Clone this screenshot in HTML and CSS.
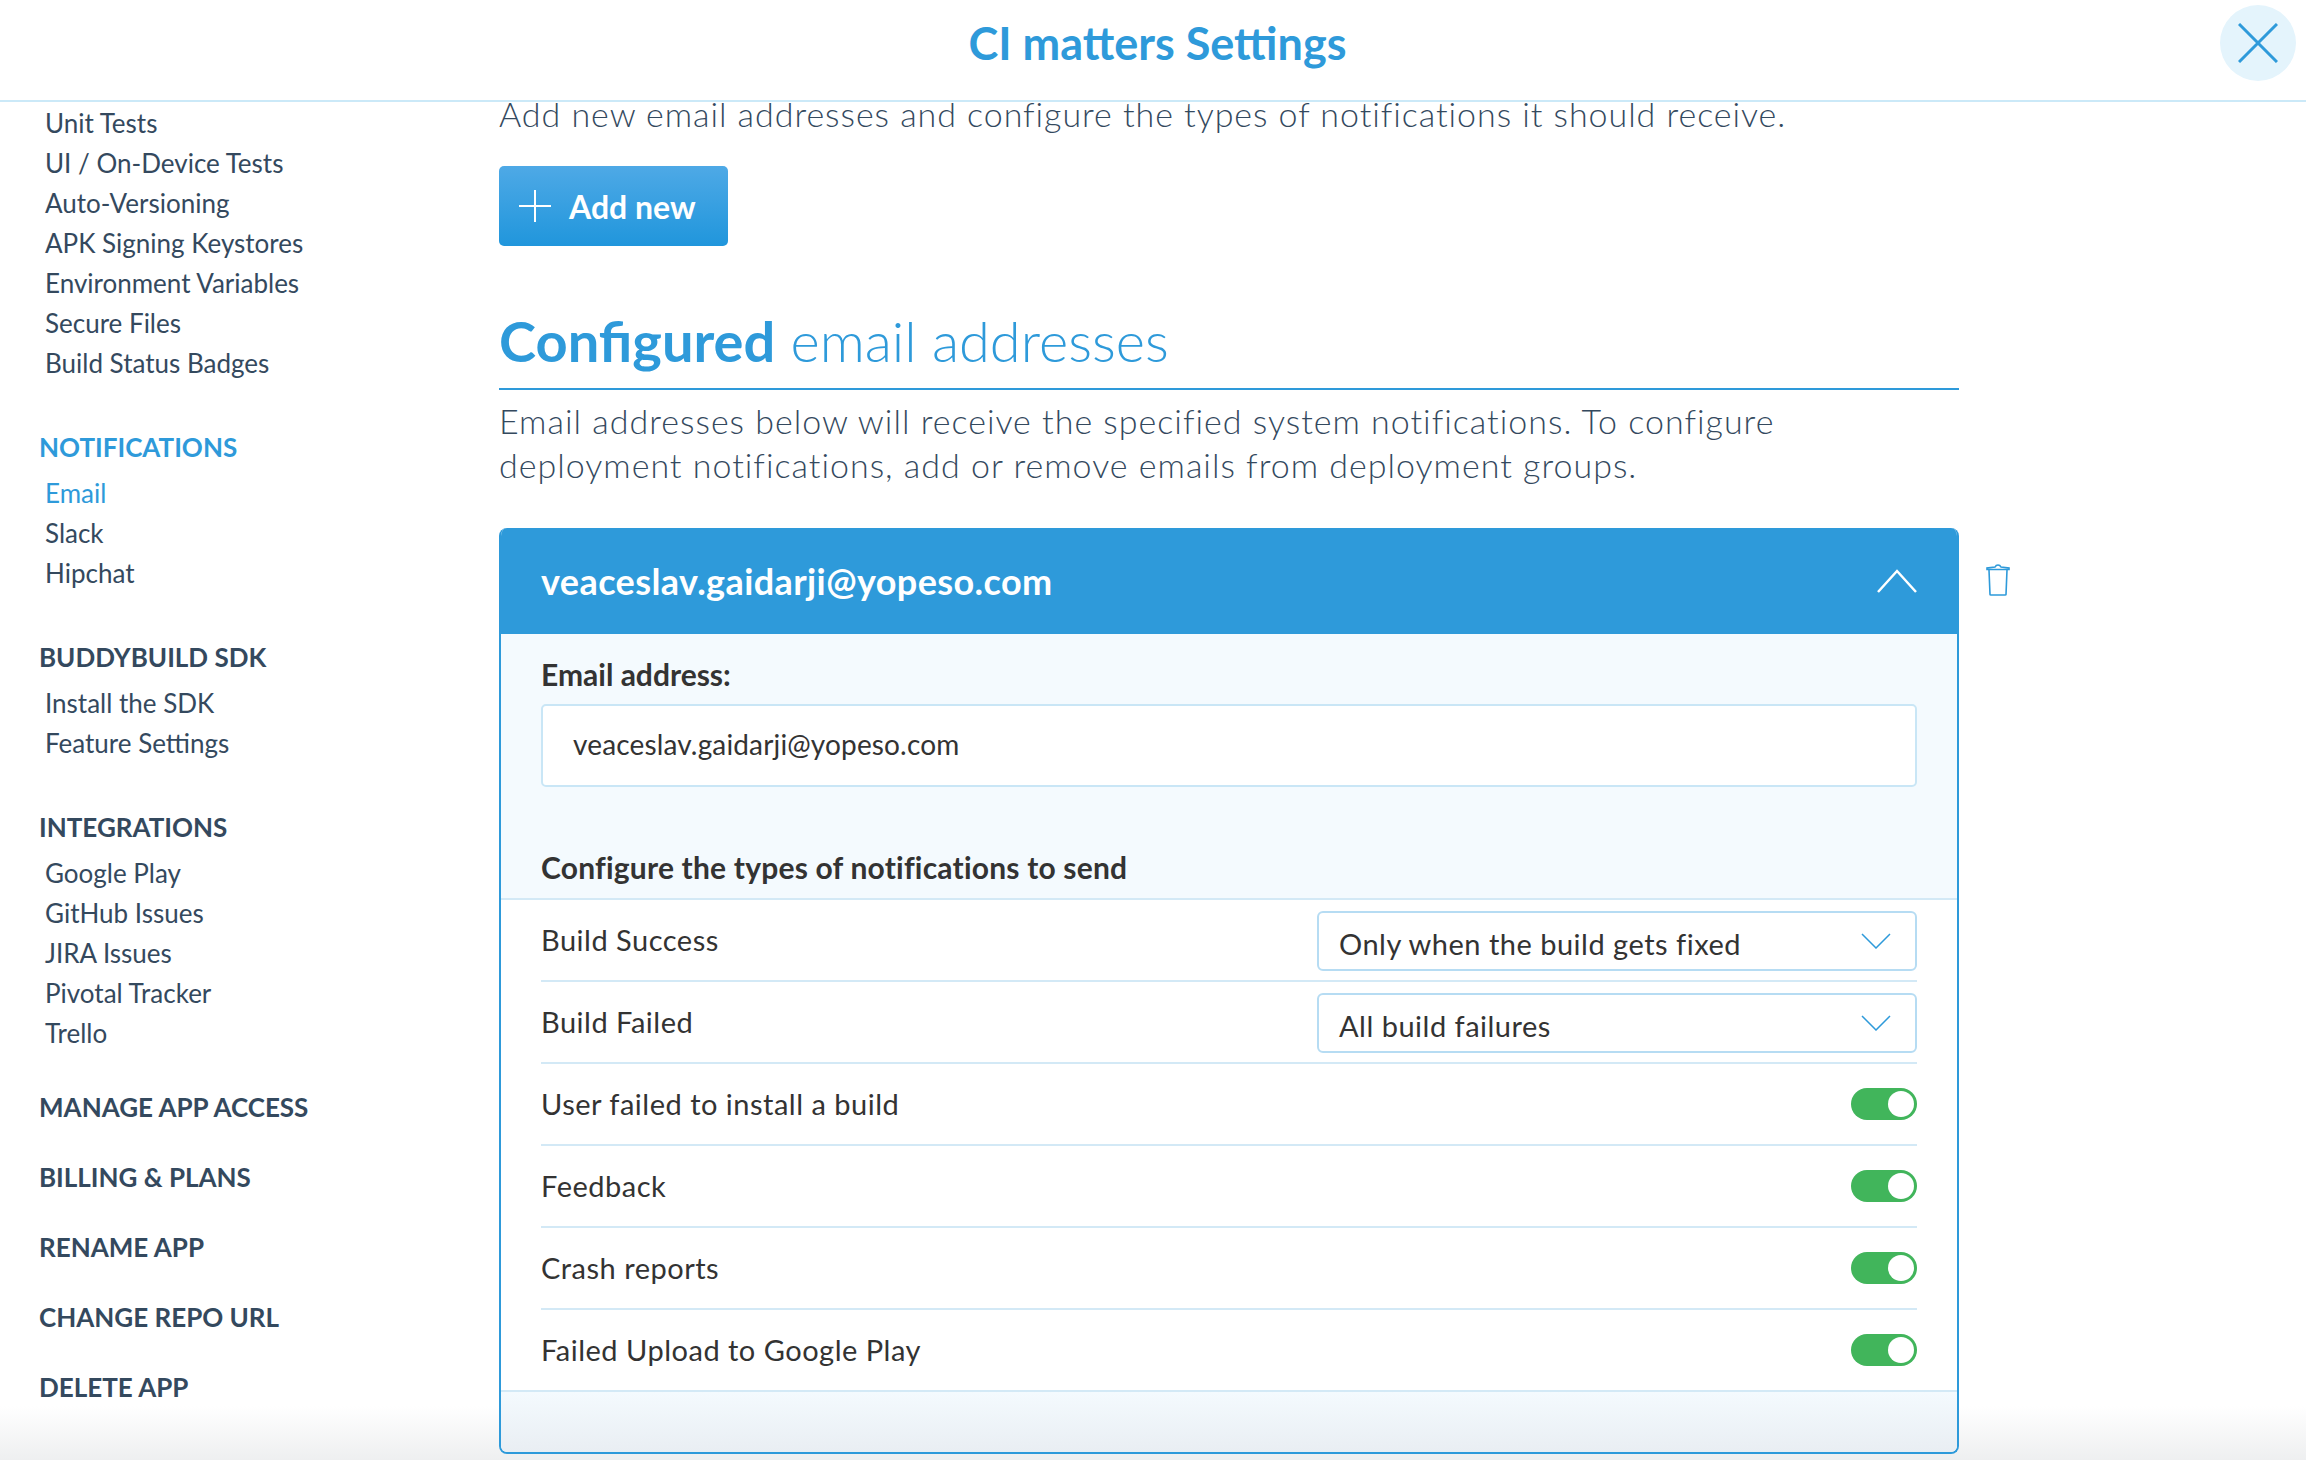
FILE: index.html
```html
<!doctype html>
<html lang="en">
<head>
	<meta charset="utf-8">
	<title>CI matters Settings</title>
	<link rel="stylesheet" href="styles.css">
</head>
<body>
	<div class="box">
		<header class="head">
			<h1 class="head_title">CI matters Settings</h1>
			<button class="close" aria-label="Close">
				<svg width="40" height="40" viewBox="0 0 40 40"><path d="M1 1L39 39M39 1L1 39" stroke="#2e9ada" stroke-width="3" fill="none"/></svg>
			</button>
		</header>

		<div class="main">
			<nav class="side">
				<ul class="side_list">
					<li>Unit Tests</li>
					<li>UI / On-Device Tests</li>
					<li>Auto-Versioning</li>
					<li>APK Signing Keystores</li>
					<li>Environment Variables</li>
					<li>Secure Files</li>
					<li>Build Status Badges</li>
				</ul>
				<h3 class="side_head side_active">NOTIFICATIONS</h3>
				<ul class="side_list">
					<li class="side_active">Email</li>
					<li>Slack</li>
					<li>Hipchat</li>
				</ul>
				<h3 class="side_head">BUDDYBUILD SDK</h3>
				<ul class="side_list">
					<li>Install the SDK</li>
					<li>Feature Settings</li>
				</ul>
				<h3 class="side_head">INTEGRATIONS</h3>
				<ul class="side_list">
					<li>Google Play</li>
					<li>GitHub Issues</li>
					<li>JIRA Issues</li>
					<li>Pivotal Tracker</li>
					<li>Trello</li>
				</ul>
				<h3 class="side_head side_single first">MANAGE APP ACCESS</h3>
				<h3 class="side_head side_single">BILLING &amp; PLANS</h3>
				<h3 class="side_head side_single">RENAME APP</h3>
				<h3 class="side_head side_single">CHANGE REPO URL</h3>
				<h3 class="side_head side_single">DELETE APP</h3>
			</nav>

			<section class="content">
				<p class="text intro">Add new email addresses and configure the types of notifications it should receive.</p>
				<button class="add">
					<svg width="32" height="32" viewBox="0 0 32 32"><path d="M16 0V32M0 16H32" stroke="#fff" stroke-width="2" fill="none"/></svg>
					Add new
				</button>
				<h2 class="title"><b>Configured</b> email addresses</h2>
				<p class="text desc">Email addresses below will receive the specified system notifications. To configure deployment notifications, add or remove emails from deployment groups.</p>

				<div class="panel_row">
					<div class="panel">
						<div class="panel_head">
							<span>veaceslav.gaidarji@yopeso.com</span>
							<svg width="40" height="24" viewBox="0 0 40 24"><path d="M1 23L20 2L39 23" stroke="#fff" stroke-width="2.5" fill="none"/></svg>
						</div>
						<div class="panel_body">
							<div class="label">Email address:</div>
							<div class="field">veaceslav.gaidarji@yopeso.com</div>
							<div class="label label_types">Configure the types of notifications to send</div>
						</div>
						<div class="rows">
							<div class="row">
								<span>Build Success</span>
								<div class="choice">
									<span>Only when the build gets fixed</span>
									<svg width="30" height="16" viewBox="0 0 30 16"><path d="M1 1L15 15L29 1" stroke="#2e9ada" stroke-width="1.5" fill="none"/></svg>
								</div>
							</div>
							<div class="row">
								<span>Build Failed</span>
								<div class="choice">
									<span>All build failures</span>
									<svg width="30" height="16" viewBox="0 0 30 16"><path d="M1 1L15 15L29 1" stroke="#2e9ada" stroke-width="1.5" fill="none"/></svg>
								</div>
							</div>
							<div class="row">
								<span>User failed to install a build</span>
								<span class="toggle"><i></i></span>
							</div>
							<div class="row">
								<span>Feedback</span>
								<span class="toggle"><i></i></span>
							</div>
							<div class="row">
								<span>Crash reports</span>
								<span class="toggle"><i></i></span>
							</div>
							<div class="row">
								<span>Failed Upload to Google Play</span>
								<span class="toggle"><i></i></span>
							</div>
						</div>
						<div class="panel_foot"></div>
					</div>
					<svg class="trash" width="24" height="32" viewBox="0 0 24 32"><path d="M1 5.5L23 5.5L23 4L15 3Q14 1 12 1Q10 1 9 3L1 4ZM3 6L4 30.5Q4 31 5 31H19Q20 31 20 30.5L21 6" stroke="#2e9ada" stroke-width="1.6" fill="none"/></svg>
				</div>
			</section>
		</div>
		<div class="fade"></div>
	</div>
</body>
</html>
```

FILE: styles.css
```css
*{
	padding: 0;
	margin: 0;
	box-sizing: border-box;
}
html,body{
	width: 100%;
	height: 100%;
	overflow: hidden;
}
body{
	font-family: "Lato", "Liberation Sans", sans-serif;
	color: #34495e;
	background: #fff;
}

.box{
	position: relative;
	height: 100%;
	width: 100%;
	display: flex;
	flex-direction: column;
}
.head{
	flex: none;
	height: 102px;
	padding-left: 9px;
	border-bottom: 2px solid #cbe9f8;
	display: flex;
	align-items: center;
	justify-content: center;
}
.head_title{
	font-size: 45px;
	font-weight: 700;
	color: #2e9ada;
	margin-top: -14px;
}
.close{
	position: absolute;
	top: 5px;
	right: 10px;
	width: 76px;
	height: 76px;
	border: 0;
	border-radius: 50%;
	background: #e4f4fc;
	display: flex;
	align-items: center;
	justify-content: center;
}

.main{
	flex: 1;
	display: flex;
}
.side{
	flex: none;
	width: 499px;
	padding: 1px 0 0 39px;
}
.side_list{
	list-style: none;
	padding-left: 6px;
	font-size: 26px;
	line-height: 40px;
}
.side_head{
	font-size: 26px;
	line-height: 40px;
	font-weight: 700;
	margin-top: 44px;
	margin-bottom: 6px;
}
.side_single{
	margin-top: 30px;
	margin-bottom: 0;
}
.first{
	margin-top: 34px;
}
.side_active{
	color: #2e9ada;
}

.content{
	flex: none;
	width: 1560px;
	margin-top: -10px;
}
.text{
	width: 1460px;
	font-size: 34px;
	line-height: 44px;
	font-weight: 300;
	letter-spacing: .95px;
}
.add{
	display: flex;
	align-items: center;
	gap: 18px;
	width: 229px;
	height: 80px;
	margin-top: 30px;
	padding-left: 20px;
	border: 0;
	border-radius: 5px;
	background: linear-gradient(#4ea9e6, #2096dc);
	color: #fff;
	font-family: inherit;
	font-size: 32px;
	font-weight: 700;
}
.title{
	width: 1460px;
	margin-top: 63px;
	padding-bottom: 15px;
	border-bottom: 2px solid #2e9ada;
	font-size: 56px;
	line-height: 64px;
	font-weight: 300;
	color: #2e9ada;
}
.title b{
	font-weight: 700;
}
.desc{
	width: 1380px;
	margin-top: 9px;
	letter-spacing: 1px;
}

.panel_row{
	display: flex;
	align-items: flex-start;
	gap: 27px;
	margin-top: 41px;
}
.panel{
	position: relative;
	z-index: 1;
	flex: none;
	width: 1460px;
	border: 2px solid #2e9ada;
	border-top: 0;
	border-radius: 8px;
	overflow: hidden;
	color: #333;
}
.panel_head{
	height: 106px;
	margin: 0 -2px;
	padding: 0 42px;
	background: #2e9ada;
	color: #fff;
	font-size: 36px;
	font-weight: 700;
	letter-spacing: .4px;
	display: flex;
	align-items: center;
	justify-content: space-between;
}
.trash{
	flex: none;
	margin-top: 36px;
}
.panel_body{
	background: #f4fafe;
	padding: 20px 40px 0;
	height: 264px;
}
.label{
	font-size: 30px;
	line-height: 40px;
	font-weight: 700;
}
.field{
	height: 83px;
	margin-top: 10px;
	padding-left: 30px;
	border: 2px solid #c9e6f6;
	border-radius: 5px;
	background: #fff;
	font-size: 28px;
	letter-spacing: .15px;
	line-height: 77px;
}
.label_types{
	margin-top: 60px;
	letter-spacing: .2px;
}
.rows{
	background: #fff;
	border-top: 2px solid #d3e9f6;
}
.row{
	height: 82px;
	margin: 0 40px;
	border-bottom: 2px solid #d3e9f6;
	font-size: 29px;
	letter-spacing: .5px;
	display: flex;
	align-items: center;
	justify-content: space-between;
}
.row > span:first-child{
	margin-bottom: 2px;
}
.row:last-child{
	margin: 0;
	padding: 0 40px;
}
.choice{
	width: 600px;
	height: 60px;
	margin-top: 2px;
	padding: 5px 24px 0 20px;
	border: 2px solid #b6dcf3;
	border-radius: 6px;
	display: flex;
	align-items: center;
	justify-content: space-between;
}
.choice svg{
	margin-top: -5px;
}
.toggle{
	width: 66px;
	height: 32px;
	padding: 3px;
	border-radius: 16px;
	background: #41b55b;
	display: flex;
	justify-content: flex-end;
}
.toggle i{
	width: 26px;
	height: 26px;
	border-radius: 50%;
	background: #fff;
}
.panel_foot{
	height: 60px;
	background: linear-gradient(#f4fafe, #e9eef3);
}

.fade{
	position: absolute;
	left: 0;
	right: 0;
	bottom: 0;
	height: 54px;
	background: linear-gradient(rgba(238,239,240,0), #eeeff0);
}
```
